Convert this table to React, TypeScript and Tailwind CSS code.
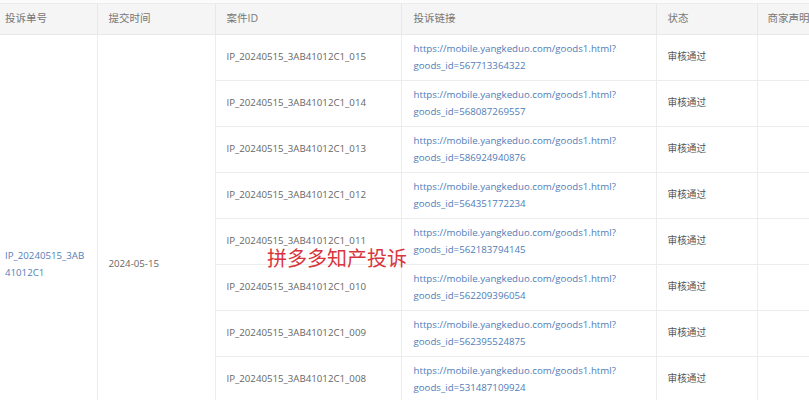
import React from "react";

const rows = [
  ["015", "567713364322"],
  ["014", "568087269557"],
  ["013", "586924940876"],
  ["012", "564351772234"],
  ["011", "562183794145"],
  ["010", "562209396054"],
  ["009", "562395524875"],
  ["008", "531487109924"],
  ["007", "531487109925"],
  ["006", "531487109926"],
];

export default function App() {
  return (
    <div
      className="relative w-[809px] h-[400px] overflow-hidden bg-white text-[#666]"
      style={{ fontFamily: '"Open Sans", "Noto Sans CJK SC", sans-serif' }}
    >
      <div className="h-[4px] bg-[#fbfbfb] border-b border-[#ececec]" />
      <table className="border-collapse table-fixed w-[900px] text-[9.7px]">
        <colgroup>
          <col className="w-[97px]" />
          <col className="w-[118px]" />
          <col className="w-[186px]" />
          <col className="w-[255px]" />
          <col className="w-[101px]" />
          <col className="w-[143px]" />
        </colgroup>
        <thead>
          <tr className="h-[30px] bg-[#f5f5f5] text-[#777] text-[10.5px]">
            <th className="font-normal text-left pl-[5px] border-r border-b border-[#e8e8e8]">投诉单号</th>
            <th className="font-normal text-left pl-[11px] border-r border-b border-[#e8e8e8]">提交时间</th>
            <th className="font-normal text-left pl-[11px] border-r border-b border-[#e8e8e8]">案件ID</th>
            <th className="font-normal text-left pl-[12px] border-r border-b border-[#e8e8e8]">投诉链接</th>
            <th className="font-normal text-left pl-[11px] border-r border-b border-[#e8e8e8]">状态</th>
            <th className="font-normal text-left pl-[10px] border-b border-[#e8e8e8]">商家声明</th>
          </tr>
        </thead>
        <tbody>
          {rows.map(([n, id], i) => (
            <tr key={n} className="h-[46px]">
              {i === 0 && (
                <>
                  <td rowSpan={10} className="align-middle pl-[5px] border-r border-[#ececec] text-[#5580b8] leading-[17px] whitespace-nowrap">
                    IP_20240515_3AB
                    <br />
                    41012C1
                  </td>
                  <td rowSpan={10} className="align-middle pl-[11px] border-r border-[#ececec]">
                    2024-05-15
                  </td>
                </>
              )}
              <td className="pl-[11px] border-r border-b border-[#ececec] whitespace-nowrap">
                IP_20240515_3AB41012C1_{n}
              </td>
              <td className="pl-[12px] border-r border-b border-[#ececec] text-[#4f7db8] leading-[17px]">
                https://mobile.yangkeduo.com/goods1.html?
                <br />
                goods_id={id}
              </td>
              <td className="pl-[11px] border-r border-b border-[#ececec] text-[#555]">审核通过</td>
              <td className="border-b border-[#ececec]" />
            </tr>
          ))}
        </tbody>
      </table>
      <div
        className="absolute left-[267px] top-[244px] text-[20px] leading-[28px] text-[#d8363c] whitespace-nowrap"
        style={{ fontFamily: '"Noto Sans CJK SC", sans-serif' }}
      >
        拼多多知产投诉
      </div>
    </div>
  );
}
